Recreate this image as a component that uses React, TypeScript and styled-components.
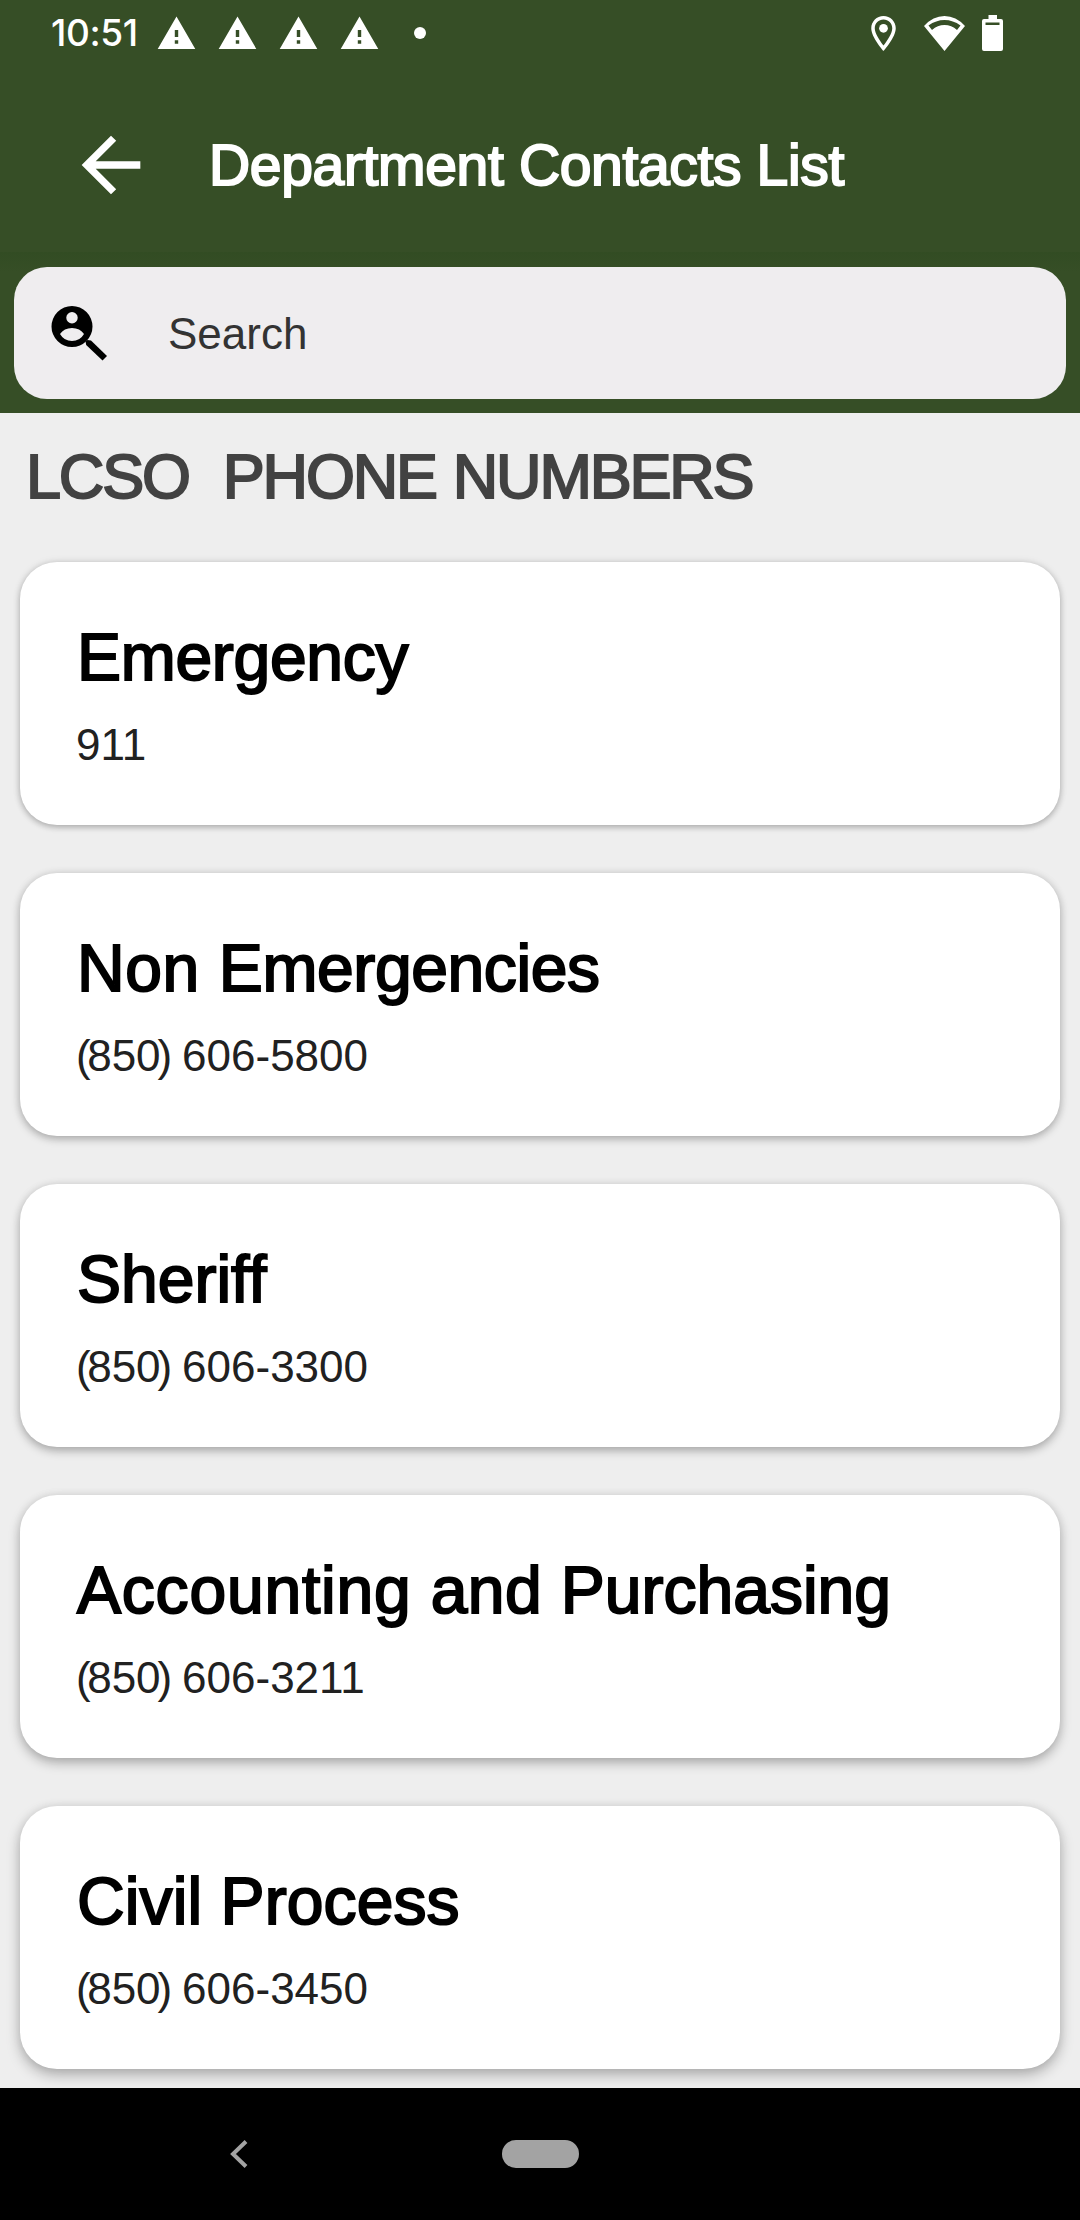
import React from "react";
import styled, { createGlobalStyle } from "styled-components";

const sans = `"Liberation Sans", Arial, sans-serif`;

const GlobalStyle = createGlobalStyle`
  * { box-sizing: border-box; }
  body { margin: 0; background: #eeeeee; font-family: ${sans}; }
`;

const Screen = styled.div`
  width: 1080px;
  height: 2220px;
  display: flex;
  flex-direction: column;
  overflow: hidden;
  background: #eeeeee;
`;

const StatusBar = styled.div`
  height: 66px;
  flex: none;
  display: flex;
  align-items: center;
  padding: 0 77px 0 51px;
  background: #364e26;
  color: #fff;
`;

const Clock = styled.span`
  width: 105px;
  font: 500 37px/66px Inter, sans-serif;
  letter-spacing: -0.4px;
  white-space: nowrap;
`;

const Alerts = styled.div`
  display: flex;
  align-items: center;
  gap: 20px;
  flex: 1;
`;

const Dot = styled.span`
  width: 12px;
  height: 12px;
  margin-left: 14px;
  border-radius: 50%;
  background: #fff;
`;

const StatusIcons = styled.div`
  display: flex;
  align-items: center;
`;

const StatusSvg = styled.svg<{ $gap?: number }>`
  display: block;
  flex: none;
  margin-left: ${(p) => p.$gap ?? 0}px;
`;

const AppBar = styled.header`
  height: 186px;
  flex: none;
  display: flex;
  align-items: center;
  padding: 12px 0 0 67px;
  background: #364e26;
  color: #fff;
`;

const BackButton = styled.button`
  width: 142px;
  height: 88px;
  flex: none;
  padding: 0;
  border: 0;
  background: none;
  color: inherit;
  text-align: left;
`;

const Title = styled.h1`
  margin: 0;
  font: 400 57px/64px ${sans};
  letter-spacing: -0.34px;
  white-space: nowrap;
  -webkit-text-stroke: 2px currentColor;
`;

const SearchStrip = styled.div`
  height: 161px;
  flex: none;
  padding: 15px 14px 14px;
  background: linear-gradient(#324c23, #364e26 20px);
`;

const SearchBox = styled.div`
  height: 132px;
  display: flex;
  align-items: center;
  padding-left: 36px;
  border-radius: 33px;
  background: #efedef;
`;

const SearchLabel = styled.span`
  margin-left: 60px;
  padding-top: 2px;
  font: 400 44px/52px ${sans};
  color: #333;
`;

const Content = styled.main`
  flex: 1;
  min-height: 0;
  overflow: hidden;
`;

const SectionTitle = styled.h2`
  height: 149px;
  margin: 0;
  padding: 27px 0 0 26px;
  font: 400 63px/72px ${sans};
  letter-spacing: -2.2px;
  word-spacing: 1.7px;
  color: #424242;
  white-space: pre;
  -webkit-text-stroke: 2px currentColor;
`;

const CardList = styled.div`
  display: flex;
  flex-direction: column;
  gap: 48px;
  padding: 0 20px;
`;

const Card = styled.article<{ $depth: number }>`
  height: 263px;
  padding: 57px 56px 0;
  border-radius: 37px;
  background: #fff;
  box-shadow:
    0 ${(p) => 2 + p.$depth}px ${(p) => 6 + p.$depth * 2}px rgba(0, 0, 0, 0.27),
    0 0 10px rgba(0, 0, 0, 0.07);
`;

const Name = styled.h3`
  margin: 0;
  padding-left: 1px;
  font: 400 66px/76px ${sans};
  color: #000;
  white-space: nowrap;
  -webkit-text-stroke: 2px currentColor;
`;

const Tracked = styled.span<{ $by: number }>`
  letter-spacing: ${(p) => p.$by}px;
`;

const Phone = styled.p`
  margin: 25px 0 0;
  font: 400 44px/50px ${sans};
  color: #212121;
`;

const NavBar = styled.nav`
  height: 132px;
  flex: none;
  display: flex;
  align-items: center;
  padding-left: 229px;
  background: #000;
`;

const HomePill = styled.span`
  width: 77px;
  height: 28px;
  margin-left: 254px;
  border-radius: 14px;
  background: #a3a3a3;
`;

type Word = [text: string, tracking: number];

const contacts: { name: Word[]; area?: string; phone: string }[] = [
  { name: [["Emergency", -0.3]], phone: "911" },
  { name: [["Non ", 0.6], ["Emergencies", -0.4]], area: "850", phone: "606-5800" },
  { name: [["Sheriff", 0]], area: "850", phone: "606-3300" },
  {
    name: [["Accounting ", 0.8], ["and ", 0.4], ["Purchasing", 0]],
    area: "850",
    phone: "606-3211",
  },
  { name: [["Civil Process", 0.1]], area: "850", phone: "606-3450" },
];

const AreaCode = ({ code }: { code: string }) => (
  <>
    <Tracked $by={-3.5}>(</Tracked>
    {code.slice(0, -1)}
    <Tracked $by={-3}>{code.slice(-1)}</Tracked>
    <Tracked $by={-1.2}>{") "}</Tracked>
  </>
);

const Warning = () => (
  <StatusSvg width="41" height="41" viewBox="0 0 24 24" fill="#fff">
    <path d="M1 21h22L12 2 1 21zm12-3h-2v-2h2v2zm0-4h-2v-4h2v4z" />
  </StatusSvg>
);

export default function App() {
  return (
    <Screen>
      <GlobalStyle />
      <StatusBar>
        <Clock>10:51</Clock>
        <Alerts>
          {[0, 1, 2, 3].map((i) => (
            <Warning key={i} />
          ))}
          <Dot />
        </Alerts>
        <StatusIcons>
          <StatusSvg width="25" height="35" viewBox="5 2 14 20" fill="#fff">
            <path d="M12 2C8.13 2 5 5.13 5 9c0 5.25 7 13 7 13s7-7.75 7-13c0-3.870-3.130-7-7-7zM7 9c0-2.760 2.240-5 5-5s5 2.240 5 5c0 2.880-2.880 7.190-5 9.880C9.920 16.210 7 11.850 7 9z" />
            <circle cx="12" cy="9" r="2.5" />
          </StatusSvg>
          <StatusSvg $gap={28} width="41" height="35" viewBox="0 0 41 35" fill="#fff" fillRule="evenodd">
            <path d="M0 10Q9 0 20.500 0T41 10L20.500 35zM4.500 9.500L8 14Q13.500 9 20.500 9T33 14L36.500 9.500Q29 4 20.500 4T4.500 9.500z" />
          </StatusSvg>
          <StatusSvg $gap={17} width="21" height="36" viewBox="0 0 21 36" fill="#fff" fillRule="evenodd">
            <path d="M6.500 0h8.500v4h4a2 2 0 0 1 2 2v28a2 2 0 0 1-2 2H2a2 2 0 0 1-2-2V6a2 2 0 0 1 2-2h4.500zM3.500 7.500v2.500h14V7.500z" />
          </StatusSvg>
        </StatusIcons>
      </StatusBar>
      <AppBar>
        <BackButton aria-label="Back">
          <StatusSvg width="88" height="88" viewBox="0 0 24 24" fill="currentColor">
            <path d="M20 11H7.830l5.590-5.590L12 4l-8 8 8 8 1.410-1.410L7.830 13H20v-2z" />
          </StatusSvg>
        </BackButton>
        <Title>Department Contacts List</Title>
      </AppBar>
      <SearchStrip>
        <SearchBox>
          <svg width="58" height="56" viewBox="50 304 58 56">
            <path
              fillRule="evenodd"
              d="M72 305a20.500 20.500 0 1 0 0 41a20.500 20.500 0 1 0 0-41zM72 311a5.700 5.700 0 1 1 0 11.400a5.700 5.700 0 1 1 0-11.400zM60 333Q64 327 72 327T84 333Q80 340 72 340T60 333z"
            />
            <path d="M85.500 340.500L87.500 339L91 339.500L107 355L102.500 359.500L86.200 344z" />
          </svg>
          <SearchLabel>Search</SearchLabel>
        </SearchBox>
      </SearchStrip>
      <Content>
        <SectionTitle>{"LCSO  PHONE NUMBERS"}</SectionTitle>
        <CardList>
          {contacts.map((c, i) => (
            <Card key={i} $depth={i}>
              <Name>
                {c.name.map(([text, by]) => (
                  <Tracked key={text} $by={by}>
                    {text}
                  </Tracked>
                ))}
              </Name>
              <Phone>
                {c.area && <AreaCode code={c.area} />}
                {c.phone}
              </Phone>
            </Card>
          ))}
        </CardList>
      </Content>
      <NavBar>
        <svg width="19" height="28" viewBox="0 0 19 28" fill="none" stroke="#a3a3a3" strokeWidth="4">
          <path d="M17 1.500L4 14l13 12.500" />
        </svg>
        <HomePill />
      </NavBar>
    </Screen>
  );
}
